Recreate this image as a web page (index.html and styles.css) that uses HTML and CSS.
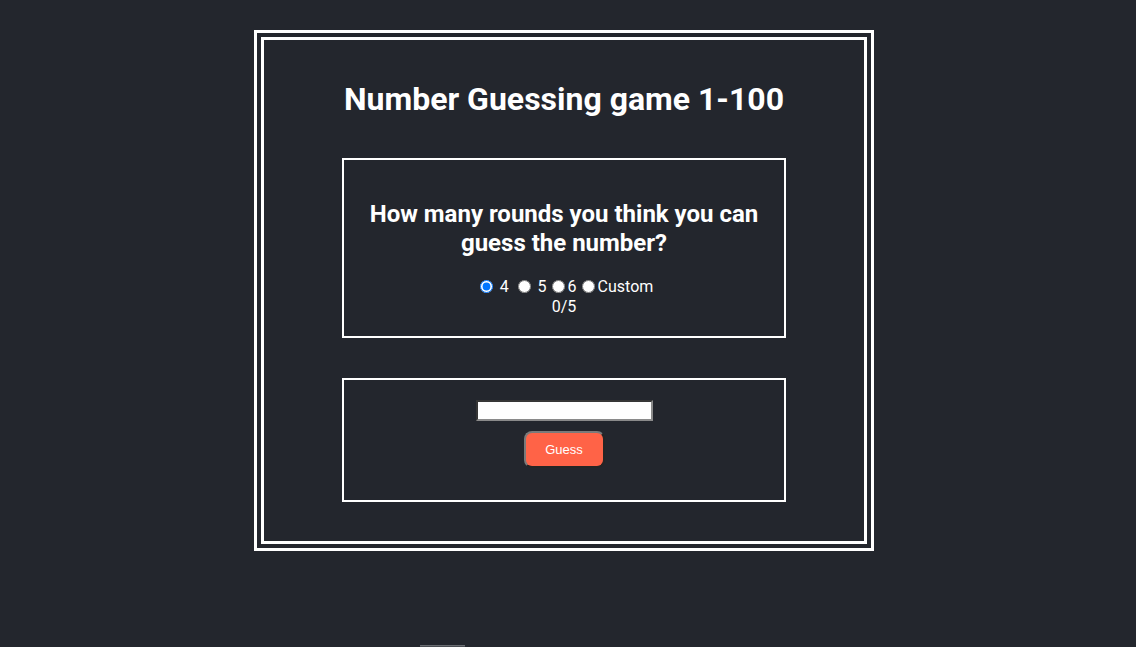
FILE: index.html
```html
<!DOCTYPE html>
<html lang="en">
<head>
<meta charset="utf-8">
<title>Number Guessing game</title>
<link rel="stylesheet" href="styles.css">
</head>
<body>
  <div class="frame">
    <h1 class="title">Number Guessing game 1-100</h1>
    <section class="panel panel-rounds">
      <h2 class="question">How many rounds you think you can guess the number?</h2>
      <div class="choices"><input type="radio" name="rounds" checked> 4 <input type="radio" name="rounds"> 5<input type="radio" name="rounds">6<input type="radio" name="rounds">Custom</div>
      <div class="count">0/5</div>
    </section>
    <section class="panel panel-guess">
      <input type="text" class="guess-input">
      <button class="guess-btn">Guess</button>
    </section>
  </div>
  <div class="peek"></div>
</body>
</html>
```

FILE: styles.css
```css
html, body {
  margin: 0;
  background: #23262d;
}
body {
  padding: 30px 8px 0 0;
  font-family: Roboto, "Liberation Sans", sans-serif;
  color: #ffffff;
  overflow: hidden;
  height: 647px;
  box-sizing: border-box;
}
.frame {
  width: 620px;
  box-sizing: border-box;
  margin: 0 auto;
  border: 10px double #ffffff;
  display: flex;
  flex-direction: column;
  align-items: center;
  padding-bottom: 39px;
}
.title {
  font-size: 32px;
  font-weight: 700;
  line-height: 38px;
  margin: 40px 0 40px;
  text-align: center;
}
.panel {
  width: 444px;
  box-sizing: border-box;
  border: 2px solid #ffffff;
  display: flex;
  flex-direction: column;
  align-items: center;
}
.panel-rounds {
  height: 180px;
  padding: 40px 20px 0;
}
.question {
  font-size: 24px;
  font-weight: 700;
  line-height: 29px;
  margin: 0 0 19px;
  text-align: center;
}
.choices {
  font-size: 16px;
  line-height: 19px;
  height: 19px;
  white-space: nowrap;
}
.choices input {
  width: 13px;
  height: 13px;
  margin: 3px 3px 0 5px;
  vertical-align: -1px;
}
.count {
  font-size: 16px;
  line-height: 19px;
  margin-top: 1px;
}
.panel-guess {
  margin-top: 40px;
  height: 124px;
  padding-top: 20px;
}
.guess-input {
  width: 177px;
  height: 21px;
  box-sizing: border-box;
  border: 2px inset #8a8a8a;
  background: #ffffff;
  padding: 1px 2px;
  margin: 0;
}
.guess-btn {
  margin-top: 10px;
  width: 81px;
  height: 37px;
  box-sizing: border-box;
  background: #ff6347;
  color: #ffffff;
  border: 2px outset #7a7a7a;
  border-radius: 8px;
  font-family: "Liberation Sans", Arial, sans-serif;
  font-size: 13px;
  padding: 0;
}
.peek {
  width: 45px;
  height: 10px;
  margin: 94px 0 0 420px;
  background: #4a4d53;
  border-top: 1px solid #6a6d72;
}
```
